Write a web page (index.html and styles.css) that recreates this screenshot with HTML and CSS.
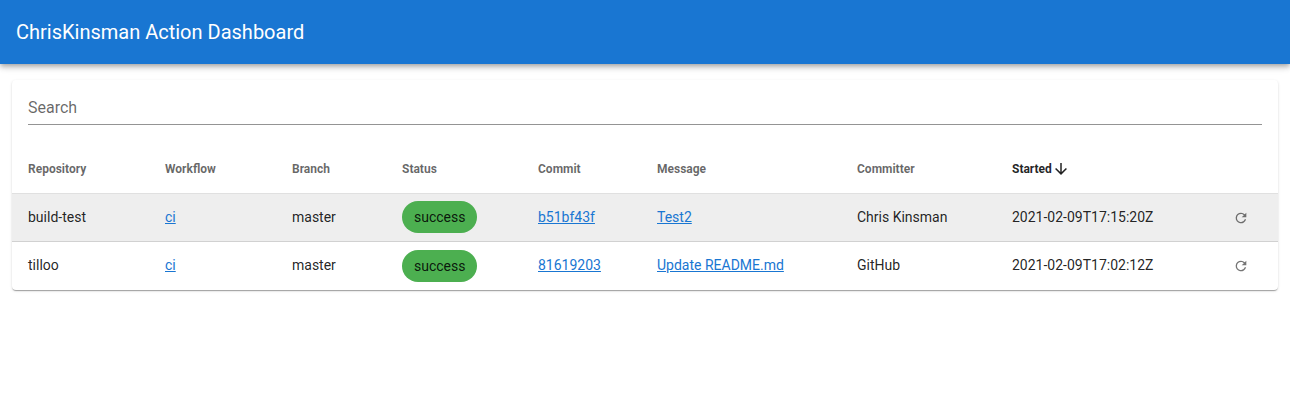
FILE: index.html
```html
<!DOCTYPE html>
<html lang="en">
<head>
<meta charset="utf-8">
<title>ChrisKinsman Action Dashboard</title>
<link rel="stylesheet" href="styles.css">
</head>
<body>
<header class="app-bar"><h1 class="app-title">ChrisKinsman Action Dashboard</h1></header>
<main class="container">
<section class="card">
<div class="card-title"><div class="search">Search</div></div>
<table class="table">
<colgroup><col class="c-repo"><col class="c-flow"><col class="c-branch"><col class="c-status"><col class="c-commit"><col class="c-message"><col class="c-committer"><col class="c-started"><col></colgroup>
<thead><tr><th>Repository</th><th>Workflow</th><th>Branch</th><th>Status</th><th>Commit</th><th>Message</th><th>Committer</th><th class="sorted"><span class="sort">Started<svg class="arrow" viewBox="0 0 24 24"><path d="M11 4h2v12l5.500-5.500 1.420 1.420L12 19.840l-7.920-7.920L5.500 10.500 11 16V4z"/></svg></span></th><th></th></tr></thead>
<tbody>
<tr class="hovered"><td>build-test</td><td><a href="#">ci</a></td><td>master</td><td class="status"><span class="chip">success</span></td><td><a href="#">b51bf43f</a></td><td><a href="#">Test2</a></td><td>Chris Kinsman</td><td>2021-02-09T17:15:20Z</td><td class="action"><svg class="refresh" viewBox="0 0 24 24"><path d="M17.650 6.350A7.958 7.958 0 0 0 12 4a8 8 0 1 0 7.730 10h-2.080A6 6 0 1 1 12 6c1.660 0 3.140.690 4.220 1.780L13 11h7V4l-2.350 2.350z"/></svg></td></tr>
<tr><td>tilloo</td><td><a href="#">ci</a></td><td>master</td><td class="status"><span class="chip">success</span></td><td><a href="#">81619203</a></td><td><a href="#">Update README.md</a></td><td>GitHub</td><td>2021-02-09T17:02:12Z</td><td class="action"><svg class="refresh" viewBox="0 0 24 24"><path d="M17.650 6.350A7.958 7.958 0 0 0 12 4a8 8 0 1 0 7.730 10h-2.080A6 6 0 1 1 12 6c1.660 0 3.140.690 4.220 1.780L13 11h7V4l-2.350 2.350z"/></svg></td></tr>
</tbody>
</table>
</section>
</main>
</body>
</html>
```
FILE: styles.css
```css
* { box-sizing: border-box; }
body { margin: 0; background: #fff; color: rgba(0,0,0,.87); font-family: Roboto, sans-serif; }
.app-bar { height: 64px; padding: 0 16px; display: flex; align-items: center; background: #1976d2; color: #fff; box-shadow: 0 2px 4px -1px rgba(0,0,0,.2), 0 4px 5px rgba(0,0,0,.14), 0 1px 10px rgba(0,0,0,.12); }
.app-title { margin: 0; font-size: 20px; font-weight: 400; line-height: 30px; }
.container { padding: 16px 12px; }
.card { border-radius: 4px; overflow: hidden; background: #fff; box-shadow: 0 2px 1px -1px rgba(0,0,0,.2), 0 1px 1px rgba(0,0,0,.14), 0 1px 3px rgba(0,0,0,.12); }
.card-title { height: 65px; padding: 12px 16px 0; }
.search { height: 33px; padding-top: 6px; border-bottom: 1px solid #949494; color: rgba(0,0,0,.6); font-size: 16px; line-height: 20px; }
.table { width: 100%; table-layout: fixed; border-collapse: separate; border-spacing: 0; }
.c-repo { width: 137px; }
.c-flow { width: 127px; }
.c-branch { width: 110px; }
.c-status { width: 136px; }
.c-commit { width: 119px; }
.c-message { width: 200px; }
.c-committer { width: 155px; }
.c-started { width: 222px; }
th, td { height: 48px; padding: 0 0 0 16px; text-align: left; white-space: nowrap; vertical-align: middle; }
th { height: 49px; border-bottom: 1px solid rgba(0,0,0,.12); color: rgba(0,0,0,.6); font-size: 12px; font-weight: 700; }
td { padding-bottom: 2px; font-size: 14px; }
td.status { padding-bottom: 0; }
td.action { padding: 0 0 0 15px; }
.hovered td { background: #eee; border-bottom: 1px solid rgba(0,0,0,.12); }
.hovered td.status { padding-bottom: 1px; }
.sorted { color: rgba(0,0,0,.87); }
.sort { display: flex; align-items: center; }
.arrow { width: 18px; height: 18px; fill: currentColor; }
a { color: #1976d2; }
.chip { display: inline-flex; align-items: center; height: 32px; padding: 0 12px; border-radius: 16px; background: #4caf50; vertical-align: middle; }
.refresh { display: block; width: 16px; height: 16px; fill: rgba(0,0,0,.54); }
```
